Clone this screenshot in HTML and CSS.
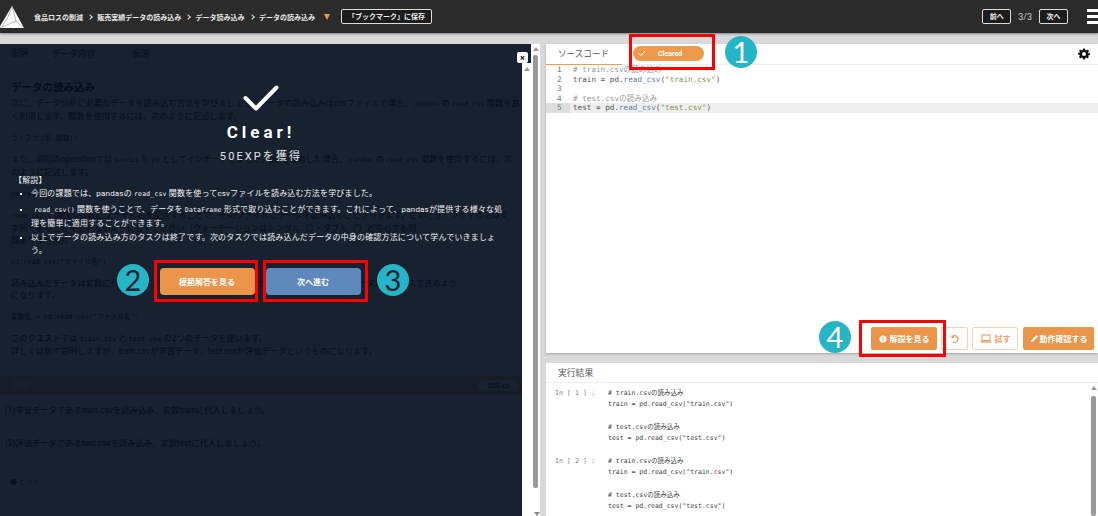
FILE: index.html
```html
<!DOCTYPE html>
<html lang="ja">
<head>
  <meta charset="utf-8">
  <title>データの読み込み</title>
  <link rel="stylesheet" href="styles.css">
</head>
<body>
  <header class="topbar">
    <svg class="topbar_logo" width="26" height="24" viewBox="0 0 26 24">
      <polygon points="13,1 25,23 0,23" fill="#fff"/>
      <path d="M13 1 L17 16 L1 23 M17 16 L25 23 M13 1 L9 12 L3 22" fill="none" stroke="#8a8a8a" stroke-width="0.6"/>
    </svg>
    <nav class="crumbs">
      <span>食品ロスの削減</span>
      <i class="crumbs_sep"></i>
      <span>販売実績データの読み込み</span>
      <i class="crumbs_sep"></i>
      <span>データ読み込み</span>
      <i class="crumbs_sep"></i>
      <span>データの読み込み</span>
      <i class="crumbs_arrow"></i>
    </nav>
    <button class="topbar_btn topbar_btn-save">「ブックマーク」に保存</button>
    <div class="pager">
      <button class="topbar_btn topbar_btn-page">前へ</button>
      <span class="pager_count">3/3</span>
      <button class="topbar_btn topbar_btn-page">次へ</button>
    </div>
    <div class="burger"><i></i><i></i><i></i></div>
  </header>

  <main class="workspace">
    <section class="left">
      <div class="lesson">
        <div class="tabs">
          <span class="tabs_item tabs_item-active">説明</span>
          <span class="tabs_item">データ内容</span>
          <span class="tabs_item">仮説</span>
        </div>
        <div class="lesson_row">
          <div class="lesson_body">
            <div class="lesson_text">
              <h2>データの読み込み</h2>
              <p class="lead">次に、データ分析に必要なデータを読み込む方法を学びましょう。データの読み込みはcsvファイルの場合、 <code>pandas</code> の <code>read_csv</code> 関数を良<br>く利用します。関数を使用するには、次のように記述します。</p>
              <pre>ライブラリ名.関数()</pre>
              <p>また、前回のoperationでは <code>pandas</code> を <code>pd</code> としてインポートしました。pd と省略した場合、 <code>pandas</code> の <code>read_csv</code> 関数を使用するには、次<br>のように記述します。</p>
              <pre>pd.read_csv()</pre>
              <p><code>read_csv()</code> 関数の引数にファイル名を記述することで、そのファイルにデータを読み込むことができます。このとき、ファイル名は文<br>字列であることを忘れないようにしてください（クォーテーションはシングル（'）・ダブル（"）どちらでも問<br>題ありません）。</p>
              <pre>pd.read_csv("ファイル名")</pre>
              <p>読み込んだデータは変数に代入します。代入することで、その変数からいつでも読み込んだデータにアクセスできるよう<br>になります。</p>
              <pre>変数名 = pd.read_csv("ファイル名")</pre>
              <p>このクエストでは <code>train.csv</code> と <code>test.csv</code> の2つのデータを使います。<br>詳しくは後で説明しますが、train.csvが学習データ、test.csvが評価データというものになります。</p>
            </div>
            <div class="task_bar">
              <span>課題</span>
              <span class="task_exp">50Exp</span>
            </div>
            <p class="task_item">(1)学習データであるtrain.csvを読み込み、変数trainに代入しましょう。</p>
            <p class="task_item task_item-next">(2)評価データであるtest.csvを読み込み、変数testに代入しましょう。</p>
            <p class="task_hint">● ヒント</p>
          </div>
          <div class="scroll scroll-inner"><i class="scroll_up"></i></div>
        </div>

        <div class="clear">
          <button class="clear_close">×</button>
          <svg class="clear_check" width="36" height="26" viewBox="0 0 36 26">
            <path d="M2.5 13 L13 23.5 L33.5 2.5" fill="none" stroke="#fff" stroke-width="4" stroke-linecap="round" stroke-linejoin="round"/>
          </svg>
          <div class="clear_title">Clear!</div>
          <div class="clear_exp">50EXPを獲得</div>
          <div class="clear_note">
            <div class="clear_note_head">【解説】</div>
            <ul>
              <li>今回の課題では、pandasの <code>read_csv</code> 関数を使ってcsvファイルを読み込む方法を学びました。</li>
              <li><code class="first">read_csv()</code> 関数を使うことで、データを <code>DataFrame</code> 形式で取り込むことができます。これによって、pandasが提供する様々な処理を簡単に適用することができます。</li>
              <li>以上でデータの読み込み方のタスクは終了です。次のタスクでは読み込んだデータの中身の確認方法について学んでいきましょう。</li>
            </ul>
          </div>
          <div class="clear_actions">
            <button class="clear_btn clear_btn-orange">模範解答を見る</button>
            <button class="clear_btn clear_btn-blue">次へ進む</button>
          </div>
        </div>
      </div>
      <div class="scroll scroll-outer"><i class="scroll_up"></i><i class="scroll_thumb"></i><i class="scroll_down"></i></div>
    </section>

    <section class="right">
      <div class="pane pane-source">
        <div class="pane_head">
          <span class="pane_tab">ソースコード</span>
          <span class="cleared"><svg width="8" height="7" viewBox="0 0 8 7"><path d="M1 3.5 L3 5.5 L7 1" fill="none" stroke="#fff" stroke-width="1"/></svg><b>Cleared</b></span>
          <svg class="gear" width="12" height="12" viewBox="0 0 24 24">
            <path fill="#111" fill-rule="evenodd" d="M10 1h4l.6 3.2 1.9.8L19.200 3.200 22 6l-1.800 2.700.8 1.900L24 11v3l-3 .6-.8 1.900L22 18l-2.800 2.800-2.700-1.800-1.900.8L14 23h-4l-.6-3.200-1.900-.8L4.800 20.800 2 18l1.800-2.500-.8-1.900L0 13v-3l3-.4.8-1.900L2 6l2.800-2.800L7.500 5l1.900-.8zM12 8a4 4 0 1 0 0 8 4 4 0 0 0 0-8z"/>
          </svg>
        </div>
        <div class="editor">
          <div class="editor_line"><span class="editor_no">1</span><span class="c-comment"># train.csvの読み込み</span></div>
          <div class="editor_line"><span class="editor_no">2</span>train = pd.<span class="c-fn">read_csv</span>(<span class="c-str">"train.csv"</span>)</div>
          <div class="editor_line"><span class="editor_no">3</span></div>
          <div class="editor_line"><span class="editor_no">4</span><span class="c-comment"># test.csvの読み込み</span></div>
          <div class="editor_line editor_line-active"><span class="editor_no">5</span>test = pd.<span class="c-fn">read_csv</span>(<span class="c-str">"test.csv"</span>)</div>
        </div>
        <div class="toolbar">
          <button class="tool tool-solid tool-explain"><svg width="8" height="8" viewBox="0 0 8 8"><circle cx="4" cy="4" r="3.500" fill="#fff"/><rect x="3.500" y="3.400" width="1" height="2.800" fill="#ea9549"/><rect x="3.500" y="1.800" width="1" height="1" fill="#ea9549"/></svg>解説を見る</button>
          <button class="tool tool-line tool-undo"><svg width="10" height="10" viewBox="0 0 10 10"><path d="M2.500 2.500 A3.300 3.300 0 1 1 3 8" fill="none" stroke="#e8954f" stroke-width="1.200"/><path d="M1.500 1 L1.500 4 L4.500 4 Z" fill="#e8954f"/></svg></button>
          <button class="tool tool-line tool-try"><svg width="12" height="9" viewBox="0 0 12 9"><rect x="2" y="1" width="8" height="5.500" fill="none" stroke="#e8954f"/><path d="M0.500 8 H11.500" stroke="#e8954f" stroke-width="1.200"/></svg>試す</button>
          <button class="tool tool-solid tool-run"><svg width="9" height="9" viewBox="0 0 9 9"><path d="M1 8 L1.500 6 L6.500 1 L8 2.500 L3 7.500 Z" fill="#fff"/></svg>動作確認する</button>
        </div>
      </div>
      <div class="pane pane-result">
        <div class="pane_head pane_head-plain"><span class="pane_title">実行結果</span></div>
        <div class="result">
          <div class="result_cell">
            <span class="result_in">In [ 1 ] :</span>
            <pre class="result_code"># train.csvの読み込み
train = pd.read_csv("train.csv")

# test.csvの読み込み
test = pd.read_csv("test.csv")</pre>
          </div>
          <div class="result_cell">
            <span class="result_in">In [ 2 ] :</span>
            <pre class="result_code"># train.csvの読み込み
train = pd.read_csv("train.csv")

# test.csvの読み込み
test = pd.read_csv("test.csv")</pre>
          </div>
        </div>
        <div class="scroll scroll-result"><i class="scroll_up"></i><i class="scroll_thumb"></i></div>
      </div>
    </section>
  </main>

  <!-- 注釈 -->
  <div class="mark mark-1"></div>
  <div class="mark mark-2"></div>
  <div class="mark mark-3"></div>
  <div class="mark mark-4"></div>
  <div class="num num-1">1</div>
  <div class="num num-2">2</div>
  <div class="num num-3">3</div>
  <div class="num num-4">4</div>
</body>
</html>
```

FILE: styles.css
```css
* {
  box-sizing: border-box;
}
html, body {
  margin: 0;
  height: 516px;
  overflow: hidden;
}
body {
  position: relative;
  display: flex;
  flex-direction: column;
  background: #d9d9d9;
  font-family: "Roboto", "Noto Sans CJK JP", sans-serif;
  color: #333;
}
button {
  font-family: inherit;
  cursor: pointer;
}
i {
  display: block;
}

/* ヘッダー */
.topbar {
  height: 33px;
  flex: none;
  display: flex;
  align-items: center;
  background: #2b2b2b;
  box-shadow: 0 1px 2px rgba(0, 0, 0, 0.4);
  color: #fff;
  position: relative;
  z-index: 3;
}
.topbar_logo {
  margin-left: -1px;
  margin-top: 1px;
  flex: none;
}
.crumbs {
  display: flex;
  align-items: center;
  margin-left: 9px;
  font-size: 7px;
  font-weight: 700;
  color: #e8e8e8;
  white-space: nowrap;
}
.crumbs_sep {
  width: 4px;
  height: 4px;
  margin: 0 5.300px 0 5px;
  border-top: 1px solid #ddd;
  border-right: 1px solid #ddd;
  transform: rotate(45deg);
}
.crumbs_arrow {
  margin-left: 9px;
  border-left: 3px solid transparent;
  border-right: 3px solid transparent;
  border-top: 6px solid #ef9a43;
}
.topbar_btn {
  height: 15px;
  padding: 0;
  border: 1px solid #ddd;
  border-radius: 2px;
  background: #1c1c1c;
  color: #eee;
  font-size: 7px;
  font-weight: 700;
  line-height: 12px;
}
.topbar_btn-save {
  width: 91px;
  margin-left: 11px;
}
.topbar_btn-page {
  width: 29px;
}
.pager {
  margin-left: auto;
  display: flex;
  align-items: center;
  gap: 7px;
}
.pager_count {
  font-size: 9px;
  color: #ccc;
}
.burger {
  width: 11px;
  margin-left: 19px;
  display: flex;
  flex-direction: column;
  gap: 3px;
}
.burger i {
  height: 3px;
  background: #fff;
}

/* 本体 */
.workspace {
  flex: 1;
  min-height: 0;
  display: flex;
  gap: 6px;
  padding-top: 11px;
}
.left {
  width: 540px;
  flex: none;
  display: flex;
  background: #fff;
}
.lesson {
  position: relative;
  width: 531px;
  display: flex;
  flex-direction: column;
  overflow: hidden;
  background: #fff;
  color: #000;
}
.tabs {
  height: 19px;
  flex: none;
  display: flex;
  align-items: center;
  font-size: 8.600px;
  border-bottom: 1px solid #ddd;
}
.tabs_item {
  padding-left: 11px;
  width: 80px;
}
.tabs_item:first-child {
  width: 41px;
}
.tabs_item-active {
  height: 100%;
  line-height: 19px;
}
.lesson_row {
  flex: 1;
  min-height: 0;
  display: flex;
}
.lesson_body {
  width: 522px;
  flex: none;
  font-size: 8.300px;
  line-height: 12.400px;
}
.lesson_text {
  padding: 0 0 0 11px;
}
.lesson_text h2 {
  margin: 19px 0 0;
  font-size: 10.500px;
  line-height: 12px;
}
.lesson_text p {
  margin: 9px 0 0;
}
.lesson_text p.lead {
  margin-top: 3px;
}
.lesson_text pre {
  margin: 9px 0 0;
  font-family: "DejaVu Sans Mono", "Noto Sans CJK JP", monospace;
  font-size: 6.800px;
  line-height: 12px;
}
code {
  font-family: "DejaVu Sans Mono", "Noto Sans CJK JP", monospace;
  font-size: 6.800px;
}
.task_bar {
  height: 19px;
  margin-top: 18.500px;
  padding: 0 3px 0 11px;
  display: flex;
  align-items: center;
  justify-content: space-between;
  background: #f7b89f;
  font-size: 9px;
  color: #fff;
}
.task_exp {
  width: 41px;
  height: 11px;
  border-radius: 6px;
  background: #fff;
  color: #000;
  font-size: 8px;
  line-height: 11px;
  text-align: center;
}
.task_item {
  margin: 9px 0 0 5px;
}
.task_item-next {
  margin-top: 21px;
}
.task_hint {
  margin: 26px 0 0 10px;
  font-size: 7px;
  color: #333;
}

/* クリア画面 */
.clear {
  position: absolute;
  inset: 0;
  padding: 41px 23px 0 14px;
  display: flex;
  flex-direction: column;
  background: rgba(4, 14, 29, 0.92);
  color: #fff;
}
.clear_close {
  position: absolute;
  top: 8px;
  right: 3px;
  width: 11px;
  height: 11px;
  padding: 0;
  border: 0;
  border-radius: 2px;
  background: #fff;
  color: #111;
  font-size: 9px;
  font-weight: 700;
  line-height: 10px;
}
.clear_check {
  align-self: center;
}
.clear_title {
  margin-top: 11px;
  font-size: 17px;
  font-weight: 700;
  line-height: 20px;
  letter-spacing: 4px;
  text-align: center;
}
.clear_exp {
  margin-top: 8px;
  font-size: 11px;
  line-height: 14px;
  letter-spacing: 2.100px;
  text-align: center;
  color: #e4e6ea;
}
.clear_note {
  margin-top: 11px;
  font-size: 8px;
  line-height: 13px;
  letter-spacing: 0.170px;
  color: #f2f3f5;
}
.clear_note_head {
  line-height: 12px;
}
.clear_note ul {
  margin: 0;
  padding: 0 0 0 17px;
  list-style: square;
}
.clear_note li {
  margin-bottom: 1.500px;
}
.clear_note li::marker {
  font-size: 6px;
}
.clear_note code {
  font-size: 6.500px;
}
.clear_note code.first {
  padding-left: 3px;
}
.clear_actions {
  margin-top: 9px;
  margin-right: 2px;
  display: flex;
  justify-content: center;
  gap: 11px;
}
.clear_btn {
  width: 95px;
  height: 27px;
  padding: 0;
  border: 0;
  border-radius: 4px;
  color: #fff;
  font-size: 8px;
  font-weight: 700;
}
.clear_btn-orange {
  background: #ea9549;
}
.clear_btn-blue {
  background: #5f88bb;
}

/* スクロールバー */
.scroll {
  position: relative;
  width: 9px;
  flex: none;
  background: #fff;
}
.scroll-inner {
  z-index: 2;
}
.scroll-inner .scroll_up {
  top: 4px;
}
.scroll_up {
  position: absolute;
  top: 3px;
  left: 1.500px;
  border-left: 3px solid transparent;
  border-right: 3px solid transparent;
  border-bottom: 4px solid #999;
}
.scroll_down {
  position: absolute;
  bottom: 0;
  left: 2.500px;
  border-left: 3px solid transparent;
  border-right: 3px solid transparent;
  border-top: 4px solid #888;
}
.scroll_thumb {
  position: absolute;
  top: 11px;
  bottom: 28px;
  left: 2px;
  width: 5px;
  border-radius: 2px;
  background: #999;
}
.scroll-result {
  position: absolute;
  top: 20px;
  right: 0;
  bottom: 0;
  width: 8px;
}
.scroll-result .scroll_up {
  top: 3px;
  left: 1px;
}
.scroll-result .scroll_thumb {
  top: 13px;
  bottom: 0;
  left: 1px;
}

/* 右カラム */
.right {
  flex: 1;
  min-width: 0;
  display: flex;
  flex-direction: column;
  gap: 10px;
}
.pane {
  position: relative;
  background: #fff;
  display: flex;
  flex-direction: column;
}
.pane-source {
  height: 309px;
  flex: none;
  box-shadow: 0 1px 2px rgba(0, 0, 0, 0.25);
}
.pane-result {
  flex: 1;
  min-height: 0;
  overflow: hidden;
}
.pane_head {
  height: 21px;
  flex: none;
  display: flex;
  align-items: center;
  border-bottom: 1px solid #efefef;
  position: relative;
}
.pane_head-plain {
  height: 20px;
}
.pane_tab {
  width: 76px;
  height: 21px;
  padding-left: 12px;
  border-bottom: 1px solid #ef9a5a;
  font-size: 8.600px;
  line-height: 20px;
  color: #555;
}
.pane_title {
  padding-left: 12px;
  font-size: 8.800px;
  color: #555;
}
.cleared {
  width: 71px;
  height: 15px;
  margin-left: 11px;
  margin-top: -1px;
  padding-left: 5px;
  display: flex;
  align-items: center;
  border-radius: 8px;
  background: #ee9a4d;
  color: #fff;
}
.cleared b {
  margin-left: 12px;
  font-size: 7px;
}
.gear {
  position: absolute;
  top: 4px;
  right: 8px;
}
.editor {
  flex: 1;
  font-family: "DejaVu Sans Mono", "Noto Sans CJK JP", monospace;
  font-size: 7.650px;
  line-height: 9.500px;
  color: #555;
}
.editor_line {
  height: 9.500px;
  white-space: pre;
}
.editor_line-active {
  background: #eee;
  height: 10px;
}
.editor_no {
  display: inline-block;
  width: 27px;
  padding: 0 8px 0 11px;
  color: #777;
}
.editor_line-active .editor_no {
  background: #ddd;
  width: 24px;
  margin-right: 3px;
}
.c-comment {
  color: #999;
}
.c-fn {
  color: #5a82b8;
}
.c-str {
  color: #7e9a3e;
}
.toolbar {
  flex: none;
  display: flex;
  align-items: center;
  justify-content: flex-end;
  gap: 5px;
  padding: 0 4px 3px 0;
}
.tool {
  height: 23px;
  padding: 0;
  display: flex;
  align-items: center;
  justify-content: center;
  gap: 3px;
  border-radius: 2px;
  font-size: 8px;
  font-weight: 700;
}
.tool-solid {
  border: 0;
  background: #ea9549;
  color: #fff;
}
.tool-line {
  border: 1px solid #f4d2b6;
  background: #fff;
  color: #e8a069;
}
.tool-explain {
  width: 66px;
}
.tool-undo {
  width: 27px;
  margin-left: -1px;
  margin-right: -1px;
}
.tool-try {
  width: 46px;
}
.tool-run {
  width: 71px;
  gap: 1px;
}

/* 実行結果 */
.result {
  flex: 1;
  min-height: 0;
  padding: 5px 0 0 9px;
  font-size: 6.500px;
  color: #444;
}
.result_cell {
  display: flex;
  margin-bottom: 11.500px;
}
.result_in {
  width: 53px;
  flex: none;
  font-family: "DejaVu Sans Mono", monospace;
  line-height: 11.300px;
  color: #777;
  letter-spacing: 0.100px;
  white-space: pre;
}
.result_code {
  margin: 0;
  font-family: "DejaVu Sans Mono", "Noto Sans CJK JP", monospace;
  font-size: 6.500px;
  line-height: 11.300px;
}

/* 注釈 */
.mark {
  position: absolute;
  border: 3px solid #f00;
  z-index: 5;
}
.mark-1 {
  left: 629px;
  top: 34px;
  width: 86px;
  height: 36px;
}
.mark-2 {
  left: 154px;
  top: 260px;
  width: 104px;
  height: 42px;
}
.mark-3 {
  left: 263px;
  top: 260px;
  width: 105px;
  height: 42px;
}
.mark-4 {
  left: 859px;
  top: 320px;
  width: 87px;
  height: 37px;
}
.num {
  position: absolute;
  width: 32px;
  height: 32px;
  border-radius: 50%;
  background: #25b5c7;
  font-family: "Lato", sans-serif;
  font-size: 29px;
  font-weight: 400;
  line-height: 31px;
  text-align: center;
  z-index: 5;
}
.num-1 {
  left: 725px;
  top: 36px;
  color: #fff;
}
.num-2 {
  left: 117px;
  top: 264px;
  color: #18212f;
}
.num-3 {
  left: 377px;
  top: 264px;
  color: #18212f;
}
.num-4 {
  left: 819px;
  top: 321px;
  color: #fff;
}
```
